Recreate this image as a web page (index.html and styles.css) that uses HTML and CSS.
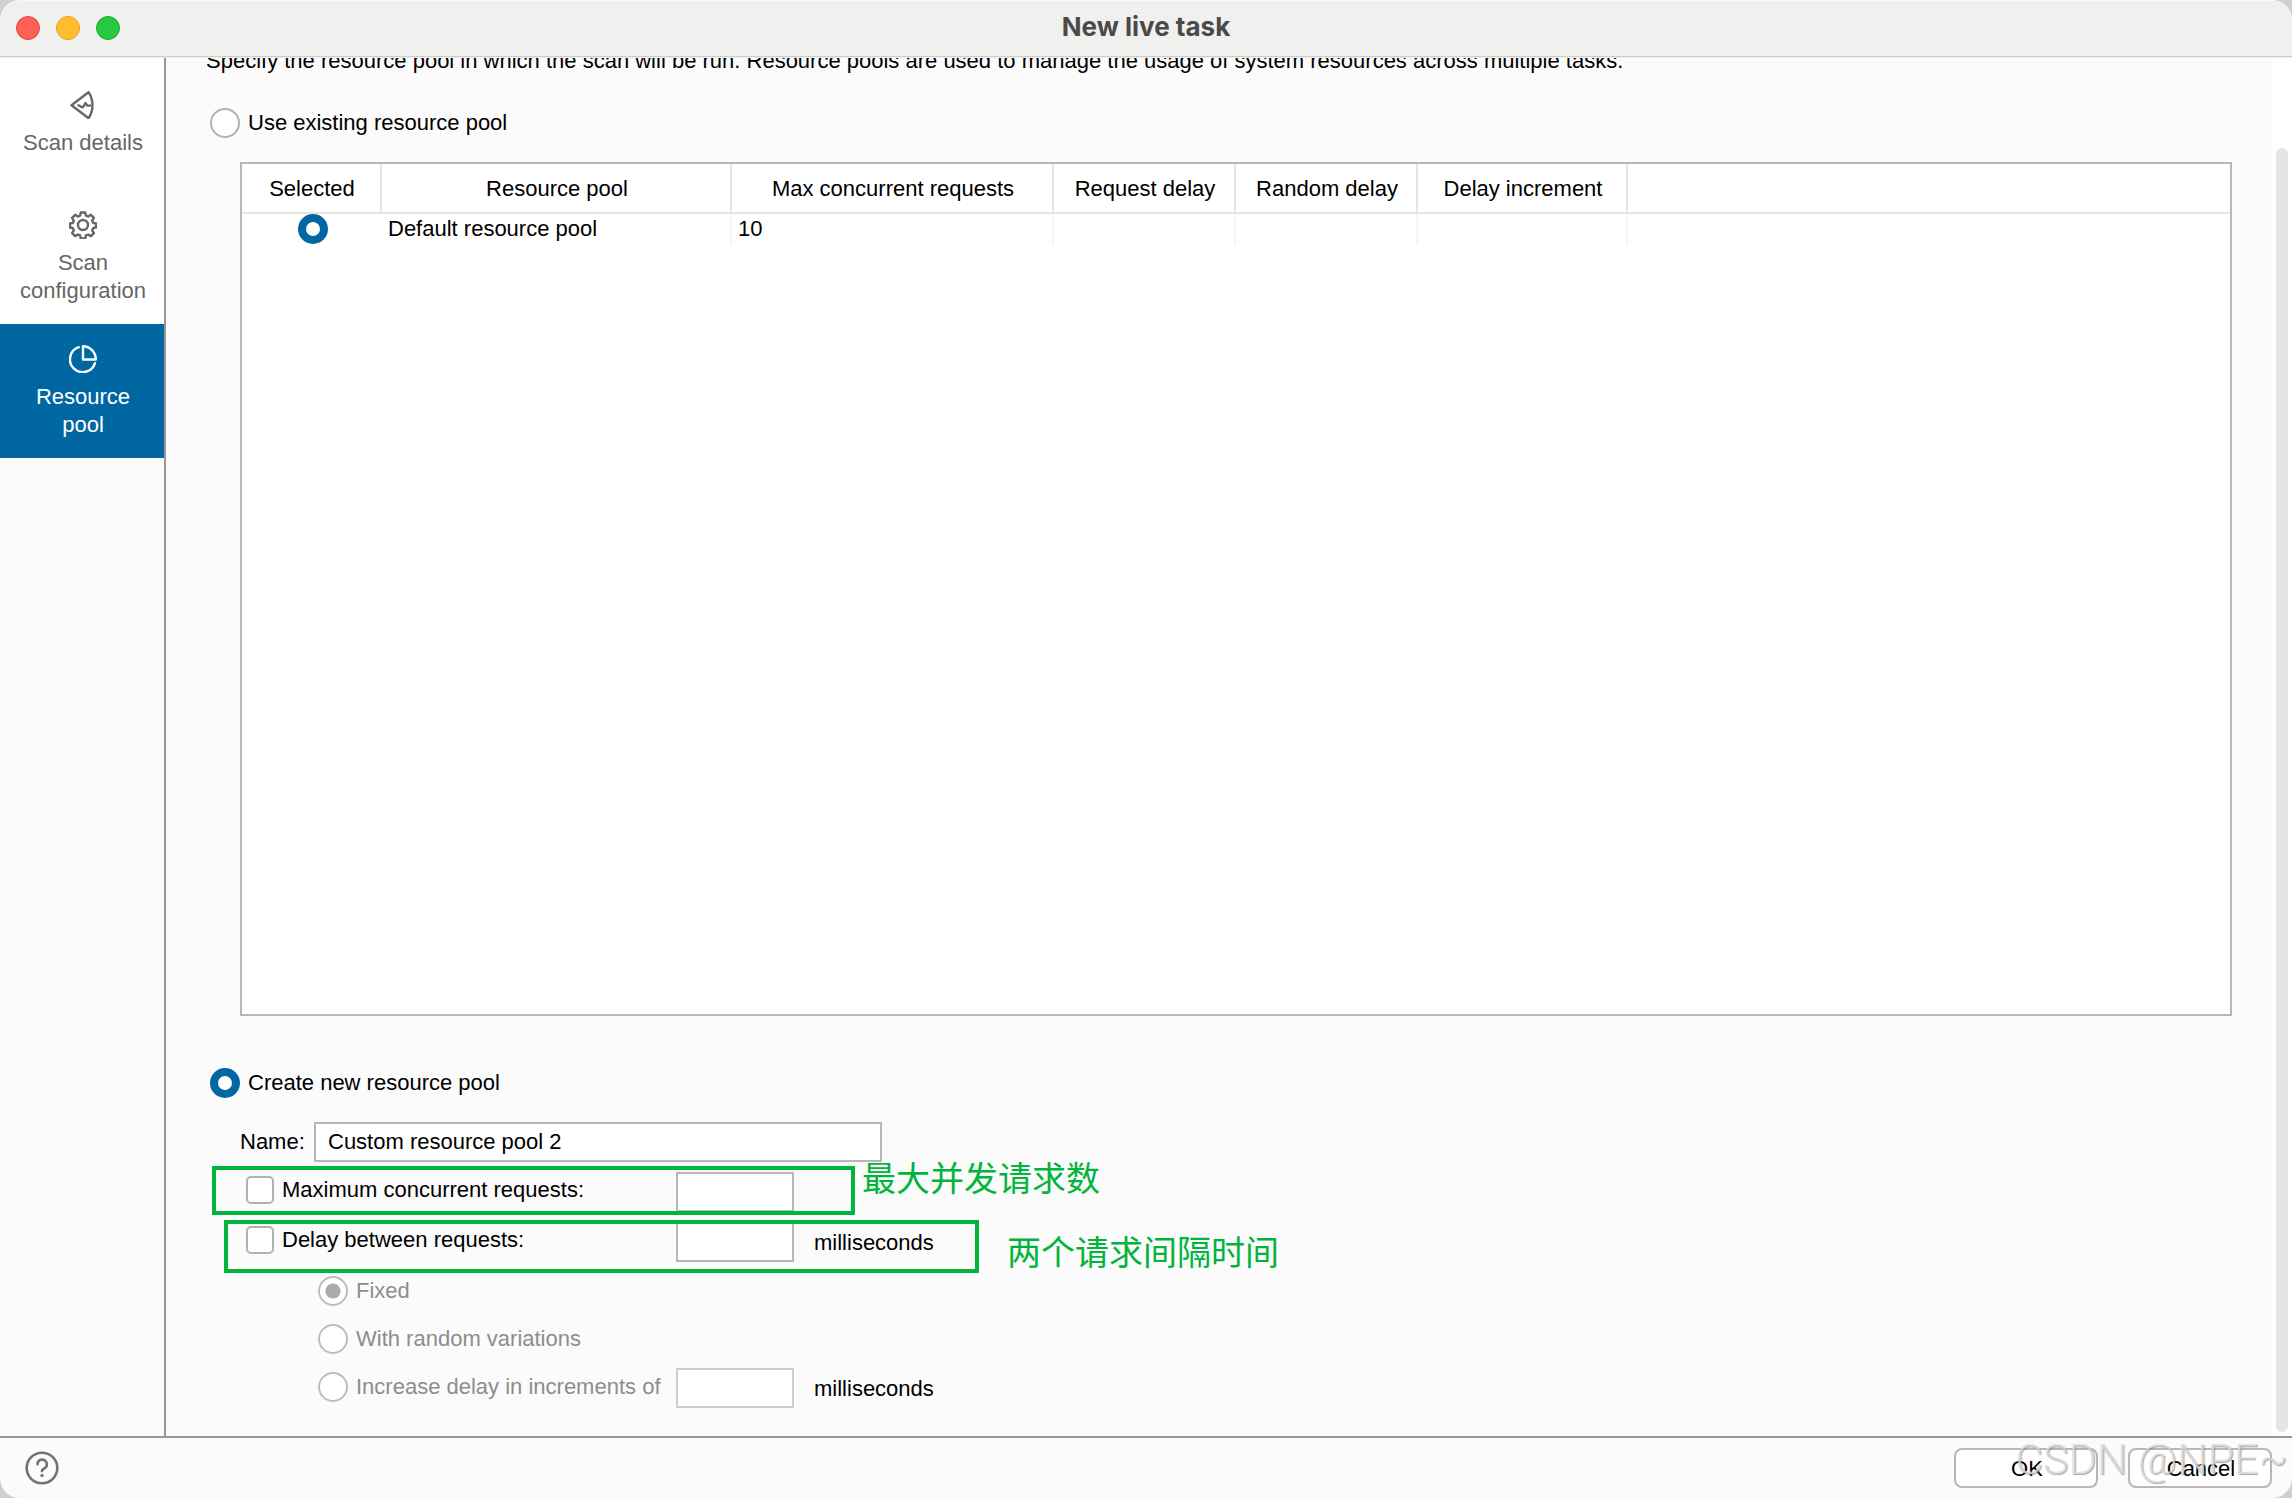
FILE: index.html
```html
<!DOCTYPE html>
<html lang="en">
<head>
<meta charset="utf-8">
<title>New live task</title>
<link rel="stylesheet" href="styles.css">
</head>
<body>
<div class="window">
  <header class="titlebar">
    <div class="lights">
      <button class="light light-close" type="button" aria-label="Close"></button>
      <button class="light light-min" type="button" aria-label="Minimise"></button>
      <button class="light light-zoom" type="button" aria-label="Zoom"></button>
    </div>
    <h1 class="title">New live task</h1>
  </header>

  <div class="body">
    <nav class="sidebar">
      <a class="nav-item" href="#details">
        <svg class="nav-icon" viewBox="0 0 28 28" aria-hidden="true"><path d="M2.500 14.200 19.500 1.200C24.800 9 24.800 19.500 19.500 27.200Z"/><path d="M9.500 14.200l3 1.800h1.600l2.400-4 1.800 2.600h3"/></svg>
        <span>Scan details</span>
      </a>
      <a class="nav-item" href="#configuration">
        <svg class="nav-icon" viewBox="0 0 28 28" aria-hidden="true"><circle cx="14" cy="14" r="5"/><path d="M11.800 1.500h4.400l.7 3.100 2.200.9 2.700-1.700 3.100 3.100-1.700 2.700.9 2.200 2.900.7v4l-2.900.7-.9 2.200 1.700 2.700-3.100 3.100-2.700-1.700-2.200.9-.7 3.100h-4.400l-.7-3.100-2.200-.9-2.700 1.700-3.100-3.100 1.700-2.700-.9-2.200-2.900-.7v-4l2.900-.7.9-2.200-1.700-2.700 3.100-3.100 2.700 1.700 2.200-.9z"/></svg>
        <span>Scan configuration</span>
      </a>
      <a class="nav-item nav-item-active" href="#pool" aria-current="page">
        <svg class="nav-icon" viewBox="0 0 28 28" aria-hidden="true"><path d="M14 1.200V14.500h12.800A12.800 13.300 0 0 0 14 1.200z"/><path d="M9.800 2.200A12.800 12.800 0 1 0 26 18.200"/></svg>
        <span>Resource pool</span>
      </a>
    </nav>

    <main class="content">
      <p class="intro">Specify the resource pool in which the scan will be run. Resource pools are used to manage the usage of system resources across multiple tasks.</p>

      <label class="choice choice-main"><input class="radio" type="radio" name="mode">Use existing resource pool</label>

      <div class="table-box">
        <table class="pools">
          <colgroup>
            <col class="col-selected"><col class="col-pool"><col class="col-max"><col class="col-delay"><col class="col-delay"><col class="col-increment"><col>
          </colgroup>
          <thead>
            <tr><th>Selected</th><th>Resource pool</th><th>Max concurrent requests</th><th>Request delay</th><th>Random delay</th><th>Delay increment</th><td></td></tr>
          </thead>
          <tbody>
            <tr><td class="cell-radio"><input class="radio" type="radio" name="pool" aria-label="Default resource pool" checked></td><td>Default resource pool</td><td>10</td><td></td><td></td><td></td><td></td></tr>
          </tbody>
        </table>
      </div>

      <label class="choice choice-main choice-create"><input class="radio" type="radio" name="mode" checked>Create new resource pool</label>

      <form class="form">
        <div class="name-row">
          <label for="name">Name:</label>
          <input class="field field-name" id="name" type="text" value="Custom resource pool 2">
        </div>
        <div class="row">
          <label class="choice choice-check"><input class="check" type="checkbox">Maximum concurrent requests:</label>
          <input class="field" type="text" aria-label="Maximum concurrent requests">
          <div class="mark mark-max"></div>
          <p class="note note-max" lang="zh">最大并发请求数</p>
        </div>
        <div class="row">
          <label class="choice choice-check"><input class="check" type="checkbox">Delay between requests:</label>
          <input class="field" id="delay" type="text" aria-label="Delay between requests">
          <label class="unit" for="delay">milliseconds</label>
          <div class="mark mark-delay"></div>
          <p class="note note-delay" lang="zh">两个请求间隔时间</p>
        </div>
        <div class="variants">
          <label class="choice choice-off"><input class="radio" type="radio" name="delay" checked disabled>Fixed</label>
          <label class="choice choice-off"><input class="radio" type="radio" name="delay" disabled>With random variations</label>
        </div>
        <div class="row">
          <label class="choice choice-off choice-increment"><input class="radio" type="radio" name="delay" disabled>Increase delay in increments of</label>
          <input class="field" id="increment" type="text" aria-label="Increment" disabled>
          <label class="unit" for="increment">milliseconds</label>
        </div>
      </form>
    </main>
    <div class="scrollbar"><div class="thumb"></div></div>
  </div>

  <footer class="footer">
    <button class="help" type="button" aria-label="Help">
      <svg viewBox="0 0 34 34" aria-hidden="true"><circle cx="17" cy="17" r="15.300"/><path d="M12.500 13.200a4.700 4.700 0 1 1 7.300 3.900c-1.800 1.100-2.900 1.600-2.900 3"/><circle class="dot" cx="17" cy="24.600" r="1.700"/></svg>
    </button>
    <div class="actions">
      <button class="btn" type="button">OK</button>
      <button class="btn" type="button">Cancel</button>
    </div>
    <span class="watermark">CSDN @NPE~</span>
  </footer>
</div>
</body>
</html>
```

FILE: styles.css
```css
* {
  box-sizing: border-box;
}

body {
  margin: 0;
  background: #cfcfcf;
  color: #000;
  font: 22px/28px "Liberation Sans", Arial, sans-serif;
}

p,
h1 {
  margin: 0;
}

button,
input {
  margin: 0;
  font: inherit;
  color: inherit;
}

.window {
  display: flex;
  flex-direction: column;
  height: 100vh;
  overflow: hidden;
  border-radius: 20px;
  background: #fbfbfb;
}

/* Title bar */
.titlebar {
  position: relative;
  z-index: 1;
  display: grid;
  grid-template-columns: 1fr auto 1fr;
  align-items: center;
  flex: none;
  height: 56px;
  padding: 0 16px;
  background: #f0f0ee;
  box-shadow: 0 1px #cdcdcd, 0 2px #eeeeee, inset 0 1px #f8f8f8;
}

.lights {
  display: flex;
  gap: 16px;
}

.light {
  width: 24px;
  height: 24px;
  padding: 0;
  border: 1px solid;
  border-radius: 50%;
}

.light-close {
  background: #ff5f57;
  border-color: #e2463f;
}

.light-min {
  background: #febc2e;
  border-color: #e0a028;
}

.light-zoom {
  background: #28c840;
  border-color: #1dad2b;
}

.title {
  padding-bottom: 2px;
  color: #4a4a49;
  font: 700 26px/32px Inter, sans-serif;
}

/* Middle area */
.body {
  display: flex;
  flex: 1;
  min-height: 0;
}

.sidebar {
  flex: none;
  width: 166px;
  border-right: 2px solid #979597;
}

.nav-item {
  display: flex;
  flex-direction: column;
  align-items: center;
  justify-content: center;
  gap: 10px;
  min-height: 134px;
  padding: 21px 19px 19px 21px;
  background: #fff;
  color: #666;
  text-align: center;
  text-decoration: none;
  white-space: nowrap;
}

.nav-item span {
  width: min-content;
  white-space: normal;
}

.nav-item:first-child span {
  width: auto;
  white-space: nowrap;
}

.nav-item-active {
  background: #0067a3;
  color: #fff;
}

.nav-icon {
  width: 28px;
  height: 28px;
  fill: none;
  stroke: currentColor;
  stroke-width: 2.4;
  stroke-linejoin: round;
  stroke-linecap: round;
}

.content {
  display: flex;
  flex: 1;
  flex-direction: column;
  min-width: 0;
  padding: 0 40px 28px;
  overflow: hidden;
}

.intro {
  flex: none;
  margin: -9px 0 33px;
  white-space: nowrap;
}

/* Radio buttons and tick boxes */
.choice {
  display: flex;
  align-items: center;
  gap: 8px;
}

.choice-main {
  align-self: flex-start;
  margin-left: 4px;
}

.choice-create {
  margin-top: 52px;
}

.choice-check {
  padding: 0 0 4px 6px;
}

.choice-off {
  padding-left: 78px;
  color: #8d8d8d;
}

.choice-increment {
  padding-bottom: 2px;
}

.radio,
.check {
  flex: none;
  appearance: none;
  background: #fff;
  border: 2px solid #b1b1b1;
}

.radio {
  width: 30px;
  height: 30px;
  border-radius: 50%;
}

.radio:checked {
  border: 8px solid #0067a3;
}

.radio:disabled {
  border: 2px solid #bdbdbd;
}

.radio:disabled:checked {
  background: radial-gradient(circle, #ababab 7px, #fff 8px);
}

.check {
  width: 28px;
  height: 28px;
  border-radius: 5px;
}

/* Resource pool table */
.table-box {
  flex: 1;
  min-height: 0;
  margin: 24px 0 0 34px;
  background: #fff;
  border: 2px solid #bab5b7;
}

.pools {
  width: 100%;
  table-layout: fixed;
  border-spacing: 0;
}

.col-selected {
  width: 140px;
}

.col-pool {
  width: 350px;
}

.col-max {
  width: 322px;
}

.col-delay {
  width: 182px;
}

.col-increment {
  width: 210px;
}

.pools th,
.pools td {
  height: 30px;
  padding: 0 6px;
  border-right: 2px solid #f5f5f5;
  font-weight: 400;
  text-align: left;
}

.pools thead th,
.pools thead td {
  height: 50px;
  padding: 2px 0 0 2px;
  border-right-color: #e5e5e5;
  border-bottom: 2px solid #e5e5e5;
  text-align: center;
}

.pools tr > :last-child {
  border-right: 0;
}

.pools .cell-radio {
  padding: 0 0 0 4px;
  border-right-color: transparent;
}

.cell-radio .radio {
  display: block;
  margin: 0 auto;
}

/* New pool form */
.form {
  display: flex;
  flex-direction: column;
  gap: 10px;
  margin: 24px 0 0 34px;
}

.name-row {
  display: grid;
  grid-template-columns: 74px 568px;
  align-items: center;
}

.field {
  width: 118px;
  height: 40px;
  padding: 0 12px;
  background: #fff;
  border: 2px solid #bab5b7;
}

.field:disabled {
  border-color: #cdcdcd;
}

.field-name {
  width: 100%;
}

.row {
  position: relative;
  display: grid;
  grid-template-columns: 436px 118px auto;
  align-items: center;
  justify-content: start;
}

.unit {
  padding: 2px 0 0 20px;
}

.variants {
  display: flex;
  flex-direction: column;
  gap: 18px;
  padding: 4px 0;
}

/* Green annotations over the form */
.mark {
  position: absolute;
  border: 4px solid #00b43c;
}

.mark-max {
  top: -6px;
  left: -28px;
  width: 643px;
  height: 49px;
}

.mark-delay {
  top: -2px;
  left: -16px;
  width: 755px;
  height: 53px;
}

.note {
  position: absolute;
  color: #00b43c;
  font: 400 34px/40px "Noto Sans CJK SC", sans-serif;
  white-space: nowrap;
}

.note-max {
  top: -15px;
  left: 622px;
}

.note-delay {
  top: 9px;
  left: 767px;
}

/* Scroll bar */
.scrollbar {
  display: flex;
  flex: none;
  width: 20px;
  padding: 92px 4px 4px;
  background: #fff;
}

.thumb {
  flex: 1;
  border-radius: 6px;
  background: #e5e5e5;
}

/* Footer */
.footer {
  position: relative;
  display: flex;
  flex: none;
  align-items: center;
  justify-content: space-between;
  padding: 10px 20px 10px 25px;
  border-top: 2px solid #979597;
}

.help {
  width: 34px;
  height: 34px;
  padding: 0;
  background: none;
  border: 0;
  color: #737373;
}

.help svg {
  display: block;
  fill: none;
  stroke: currentColor;
  stroke-width: 2.6;
  stroke-linecap: round;
}

.help .dot {
  fill: currentColor;
  stroke: none;
}

.actions {
  display: flex;
  gap: 30px;
}

.btn {
  width: 144px;
  height: 40px;
  padding: 2px 0 0 2px;
  background: #fff;
  border: 2px solid #bab5b7;
  border-radius: 8px;
}

.watermark {
  position: absolute;
  right: 4px;
  bottom: 15px;
  color: rgba(225, 225, 225, 0.8);
  font: 300 43px/48px Roboto, sans-serif;
  text-shadow: 1px 1px 1px rgba(110, 110, 110, 0.6);
  pointer-events: none;
}
```
